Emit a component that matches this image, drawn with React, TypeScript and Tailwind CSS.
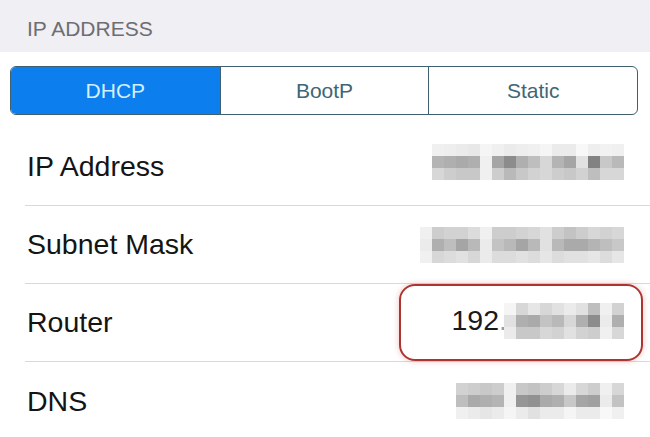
import React from "react";

const C = 12;

function Mosaic({ data }: { data: number[][] }) {
  const cols = data[0].length;
  return (
    <svg width={cols * C} height={data.length * C} className="block relative">
      {data.map((row, r) =>
        row.map((v, c) => (
          <rect key={`${r}-${c}`} x={c * C} y={r * C} width={C} height={C} fill={`rgb(${v},${v},${v})`} />
        ))
      )}
    </svg>
  );
}

const ip = [
  [240, 238, 235, 232, 245, 240, 235, 238, 240, 245, 235, 235, 248, 238, 242, 240],
  [180, 175, 170, 175, 240, 165, 140, 175, 190, 215, 180, 165, 225, 130, 200, 185],
  [215, 205, 200, 200, 240, 205, 185, 200, 210, 215, 205, 200, 210, 190, 215, 215],
];
const subnet = [
  [240, 205, 210, 210, 220, 240, 205, 205, 210, 215, 225, 205, 195, 205, 215, 210, 215],
  [235, 175, 190, 165, 185, 235, 195, 185, 165, 185, 225, 185, 170, 170, 180, 190, 200],
  [240, 215, 220, 225, 215, 235, 220, 220, 225, 220, 230, 220, 225, 225, 230, 220, 230],
];
const router = [
  [245, 215, 230, 215, 225, 235, 225, 190, 240, 210],
  [225, 175, 170, 195, 185, 215, 175, 140, 235, 175],
  [235, 200, 200, 215, 210, 225, 210, 205, 240, 215],
];
const dns = [
  [210, 205, 200, 205, 240, 200, 195, 205, 215, 235, 215, 205, 240, 215],
  [190, 170, 175, 180, 240, 150, 145, 170, 175, 200, 165, 160, 235, 195],
  [240, 235, 230, 235, 245, 235, 225, 235, 235, 245, 235, 235, 248, 240],
];

function Row({ label, children, last, extra }: { label: string; children: React.ReactNode; last?: boolean; extra?: React.ReactNode }) {
  return (
    <div className={`relative ml-[25px] h-[78px] flex items-center justify-between ${last ? "" : "border-b border-[#d9d9dc]"}`}>
      <span className="pl-[2px] text-[28.5px] text-[#141414] leading-none">{label}</span>
      <div className="pr-[26px] flex items-center">{children}</div>
      {extra}
    </div>
  );
}

export default function App() {
  return (
    <div className="w-[650px] h-[437px] overflow-hidden bg-white" style={{ fontFamily: '"Liberation Sans", Arial, sans-serif' }}>
      <div className="h-[52px] bg-[#efeff4] flex items-center pl-[27px] pt-[4px]">
        <span className="text-[21px] text-[#6d6d72] leading-none">IP ADDRESS</span>
      </div>
      <div className="pt-[14px] pl-[10px] pr-[12px]">
        <div className="h-[49px] grid grid-cols-3 rounded-[6px] border border-[#3f6070] overflow-hidden">
          <div className="bg-[#0c7eee] flex items-center justify-center text-[21px] text-[#d4f0ff]">DHCP</div>
          <div className="border-l border-[#3f6070] flex items-center justify-center text-[21px] text-[#3d6676]">BootP</div>
          <div className="border-l border-[#3f6070] flex items-center justify-center text-[21px] text-[#3d6676]">Static</div>
        </div>
      </div>
      <div className="mt-[13px]">
        <Row label="IP Address">
          <div className="-mt-[10px]">
            <Mosaic data={ip} />
          </div>
        </Row>
        <Row label="Subnet Mask">
          <Mosaic data={subnet} />
        </Row>
        <Row
          label="Router"
          extra={
            <div className="absolute left-[374px] right-[7px] top-0 bottom-0 rounded-[16px] border-2 border-[#ad3430] shadow-[0_0_6px_rgba(220,120,120,0.45)]" />
          }
        >
          <div className="flex items-center -mt-[4px]">
            <span className="text-[28.5px] leading-none text-[#1a1a1a]">192</span>
            <span className="text-[28.5px] leading-none text-[#9a9a9a] -mr-[3px]">.</span>
            <Mosaic data={router} />
          </div>
        </Row>
        <Row label="DNS" last>
          <Mosaic data={dns} />
        </Row>
      </div>
    </div>
  );
}
